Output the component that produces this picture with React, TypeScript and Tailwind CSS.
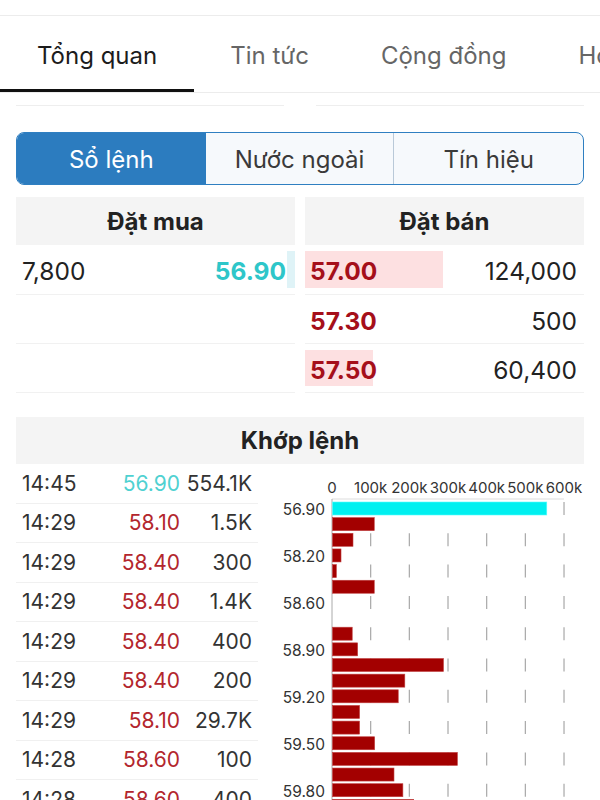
import React from 'react';

const tabs = ['Tổng quan', 'Tin tức', 'Cộng đồng', 'Hỏi đáp'];

const trades = [
  { t: '14:45', p: '56.90', v: '554.1K', up: true },
  { t: '14:29', p: '58.10', v: '1.5K' },
  { t: '14:29', p: '58.40', v: '300' },
  { t: '14:29', p: '58.40', v: '1.4K' },
  { t: '14:29', p: '58.40', v: '400' },
  { t: '14:29', p: '58.40', v: '200' },
  { t: '14:29', p: '58.10', v: '29.7K' },
  { t: '14:28', p: '58.60', v: '100' },
  { t: '14:28', p: '58.60', v: '400' },
];

// volume per price step, in thousands
const bars = [554.1, 108, 53, 22, 10, 108, 0, 0, 51, 65, 287, 187, 170, 70, 70, 109, 323, 159, 182, 210];
const priceLabels: Record<number, string> = { 0: '56.90', 3: '58.20', 6: '58.60', 9: '58.90', 12: '59.20', 15: '59.50', 18: '59.80' };

const X0 = 62; // axis origin inside svg
const PX_PER_K = 0.3867;

const VolumeChart = () => (
  <svg width={330} height={335} className="block" style={{ fontFamily: 'Inter, sans-serif' }}>
    {[0, 1, 2, 3, 4, 5, 6].map((i) => (
      <text key={i} x={X0 + i * 38.67} y={26} fontSize={15} fill="#333" textAnchor="middle">
        {i === 0 ? '0' : `${i}00k`}
      </text>
    ))}
    <line x1={X0} y1={32} x2={X0 + 232} y2={32} stroke="#ddd" strokeWidth={1} />
    {[1, 2, 3, 4, 5, 6].map((i) => (
      <line
        key={i}
        x1={X0 + i * 38.67}
        y1={35}
        x2={X0 + i * 38.67}
        y2={335}
        stroke="#a8a8a8"
        strokeWidth={1.2}
        strokeDasharray="13 18.3"
      />
    ))}
    <line x1={X0} y1={32} x2={X0} y2={335} stroke="#aaa" strokeWidth={1} />
    {bars.map((v, i) =>
      v > 0 ? (
        <rect
          key={i}
          x={X0 + 0.5}
          y={35 + i * 15.65}
          width={v * PX_PER_K}
          height={13}
          fill={i === 0 ? '#00f0f0' : '#a30000'}
          stroke={i === 0 ? '#5ff' : '#c04040'}
          strokeWidth={0.6}
        />
      ) : null
    )}
    {Object.entries(priceLabels).map(([i, label]) => (
      <text key={i} x={X0 - 7} y={35 + Number(i) * 15.65 + 13} fontSize={15.5} fill="#333" textAnchor="end">
        {label}
      </text>
    ))}
  </svg>
);

export default function App() {
  return (
    <div className="w-[600px] h-[800px] overflow-hidden bg-white font-['Inter',sans-serif] text-[#222]">
      <div className="h-4 border-b border-[#ececec]" />

      {/* top tabs */}
      <div className="flex h-[77px] border-b border-[#ececec] whitespace-nowrap">
        {tabs.map((t, i) => (
          <div
            key={t}
            className={
              i === 0
                ? 'shrink-0 flex items-center px-[37px] pt-[6px] text-[24px] text-[#1c1c1c] border-b-[3px] border-[#111]'
                : 'shrink-0 flex items-center px-[36px] pt-[6px] text-[24px] text-[#666] border-b-[3px] border-transparent'
            }
          >
            {t}
          </div>
        ))}
      </div>

      {/* leftover row from content above */}
      <div className="grid grid-cols-2 gap-8 px-4 h-[13px]">
        <div className="border-b border-[#eeeeee]" />
        <div className="border-b border-[#eeeeee]" />
      </div>

      {/* segmented control */}
      <div className="px-4 mt-[26px]">
        <div className="grid grid-cols-3 h-[53px] rounded-lg border-[1.5px] border-[#2f7fc1] overflow-hidden bg-[#f6f9fc]">
          <div className="flex items-center justify-center pt-[2px] bg-[#2c7cbf] text-white text-[24px]">Sổ lệnh</div>
          <div className="flex items-center justify-center pt-[2px] text-[24px] text-[#3a3a3a] border-r border-[#b9c9d8]">Nước ngoài</div>
          <div className="flex items-center justify-center pt-[2px] text-[24px] text-[#3a3a3a]">Tín hiệu</div>
        </div>
      </div>

      {/* order book */}
      <div className="grid grid-cols-2 gap-[10px] px-4 mt-3">
        <div>
          <div className="h-12 bg-[#f4f4f4] flex items-center justify-center pt-[1px] font-bold text-[24px] text-[#222]">Đặt mua</div>
          <div className="h-[50px] flex items-stretch border-b border-[#f1f1f1]">
            <div className="flex-1 flex items-center justify-between pt-[4px] pl-[6px] pr-[1px] text-[24.5px]">
              <span className="text-[#222]">7,800</span>
              <span className="font-bold text-[#2ec6c9]">56.90</span>
            </div>
            <div className="w-[8px] my-[6px] bg-[#dff3f7]" />
          </div>
          <div className="h-[49px] border-b border-[#f1f1f1]" />
          <div className="h-[49px] border-b border-[#f1f1f1]" />
        </div>
        <div>
          <div className="h-12 bg-[#f4f4f4] flex items-center justify-center pt-[1px] font-bold text-[24px] text-[#222]">Đặt bán</div>
          {[
            { p: '57.00', v: '124,000', w: 138 },
            { p: '57.30', v: '500', w: 0 },
            { p: '57.50', v: '60,400', w: 68 },
          ].map((r, i) => (
            <div key={r.p} className={`relative ${i === 0 ? 'h-[50px]' : 'h-[49px]'} border-b border-[#f1f1f1]`}>
              {r.w > 0 && <div className="absolute left-0 top-[6px] bottom-[6px] bg-[#fde0e1]" style={{ width: r.w }} />}
              <div className="relative h-full flex items-center justify-between pt-[4px] pl-[5px] pr-[7px] text-[24.5px]">
                <span className="font-bold text-[#a50f1a]">{r.p}</span>
                <span className="text-[#222]">{r.v}</span>
              </div>
            </div>
          ))}
        </div>
      </div>

      {/* matched orders */}
      <div className="px-4 mt-[24px]">
        <div className="h-[47px] bg-[#f4f4f4] flex items-center justify-center font-bold text-[24px] text-[#222]">Khớp lệnh</div>
      </div>
      <div className="flex pl-4">
        <div className="w-[242px] shrink-0">
          {trades.map((r, i) => (
            <div key={i} className="h-[39.5px] flex items-center border-b border-[#f0f0f0] text-[21px] pl-[6px] pr-[6px]">
              <span className="w-[60px] text-[#333]">{r.t}</span>
              <span className={`w-[98px] text-right ${r.up ? 'text-[#4fd1d1]' : 'text-[#b3262d]'}`}>{r.p}</span>
              <span className="flex-1 text-right text-[#333]">{r.v}</span>
            </div>
          ))}
        </div>
        <div className="ml-[12px] mt-[3px]">
          <VolumeChart />
        </div>
      </div>
    </div>
  );
}
